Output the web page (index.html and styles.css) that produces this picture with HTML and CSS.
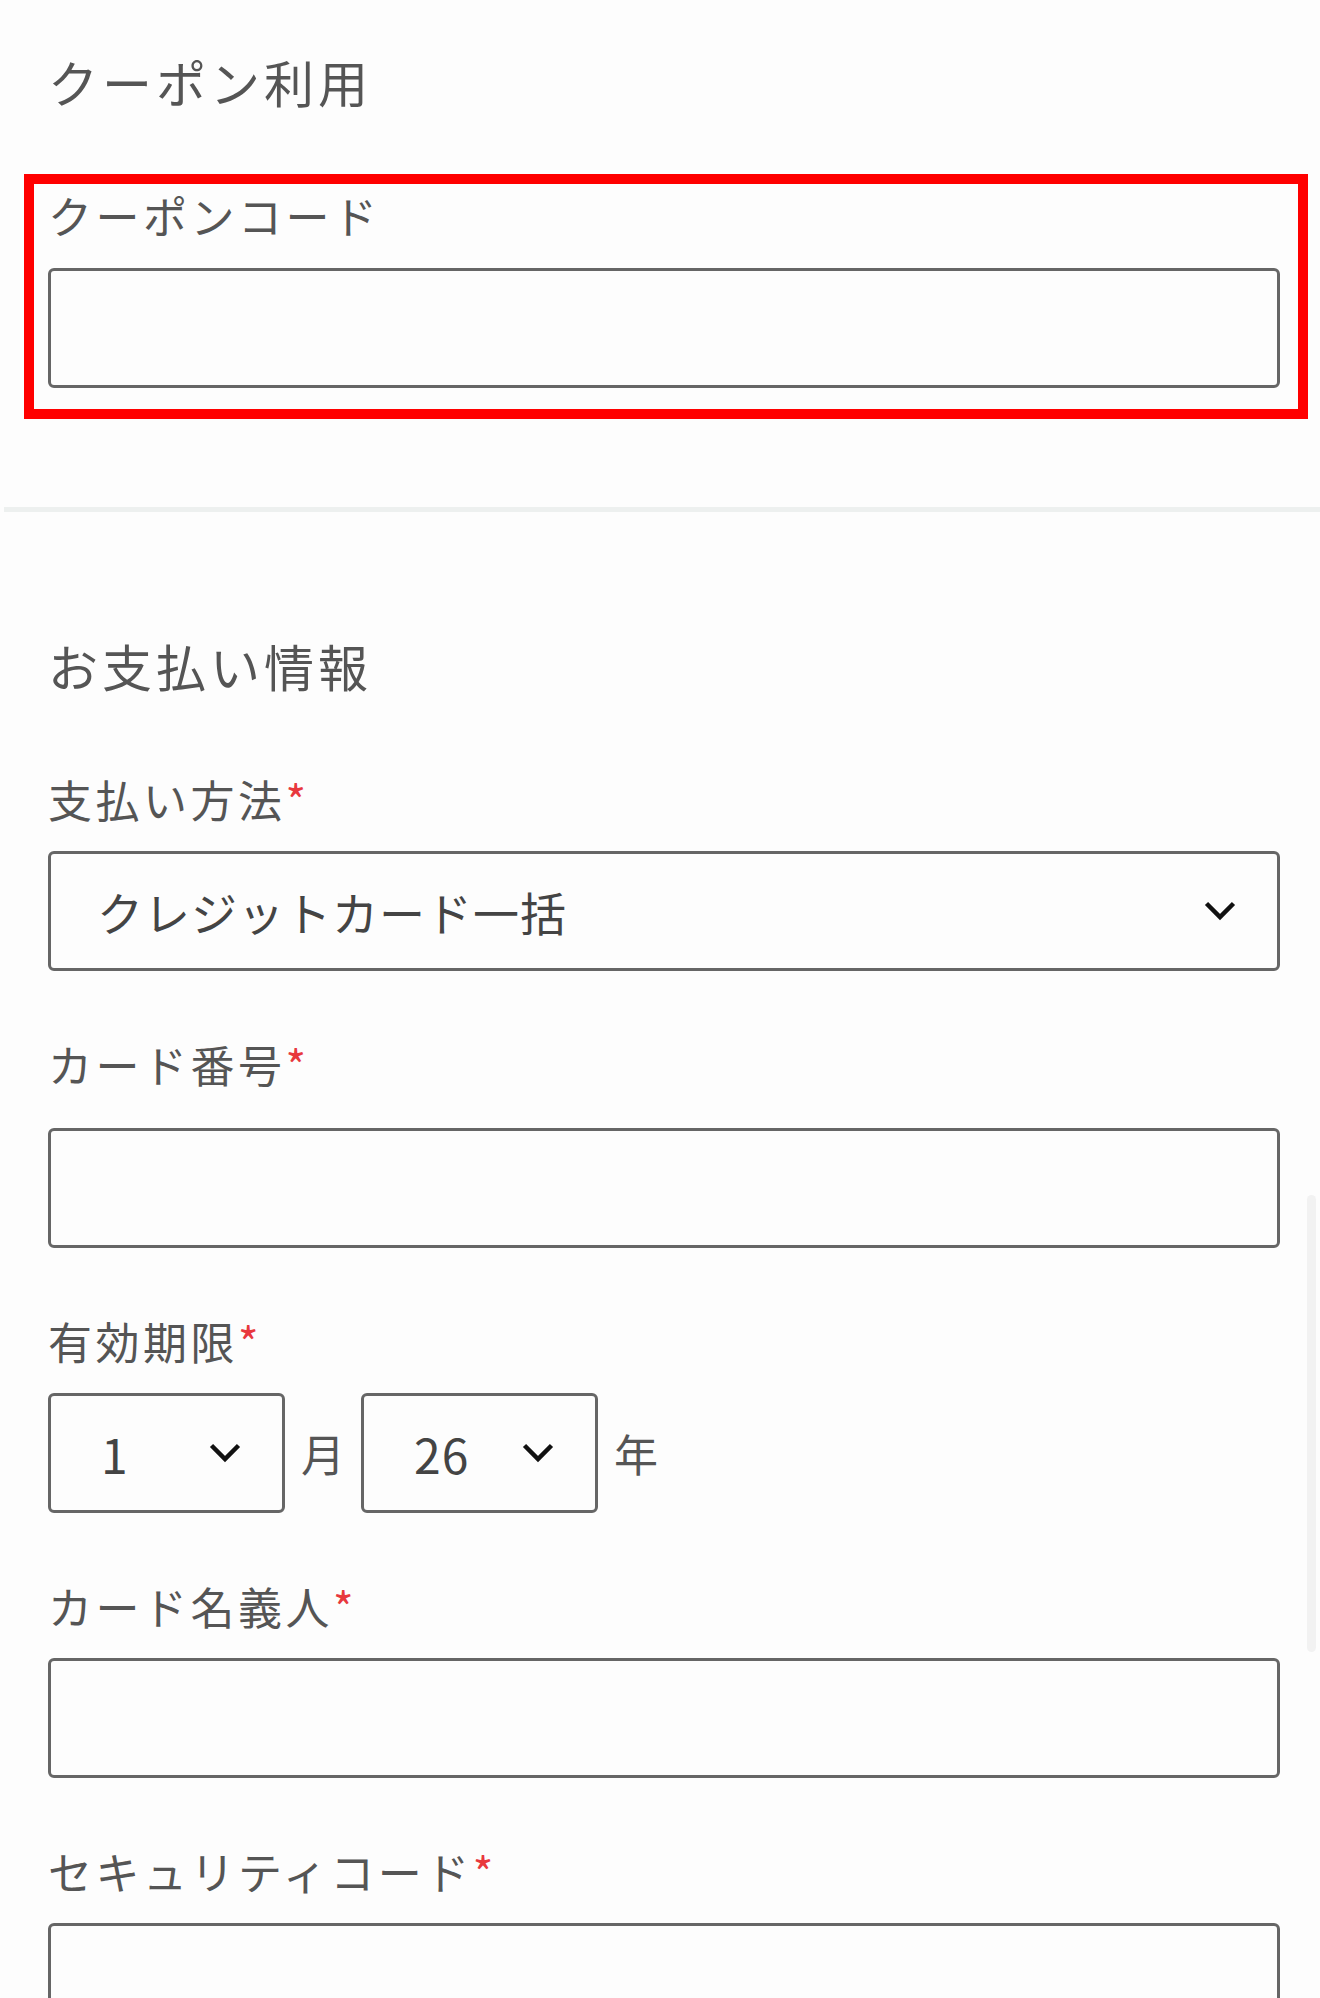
FILE: index.html
```html
<!DOCTYPE html>
<html lang="ja">
<head>
    <meta charset="UTF-8">
    <meta name="viewport" content="width=device-width, initial-scale=1.0">
    <title>お支払い</title>
    <link rel="stylesheet" href="styles.css">
</head>
<body>
    <section class="section coupon">
        <h2 class="section-title">クーポン利用</h2>
        <div class="highlight">
            <label class="field-label" for="couponCode">クーポンコード</label>
            <input class="text-input" type="text" id="couponCode">
        </div>
    </section>

    <hr class="divider">

    <section class="section payment">
        <h2 class="section-title">お支払い情報</h2>

        <div class="field">
            <label class="field-label">支払い方法<span class="required">*</span></label>
            <div class="select">
                <span class="select-value">クレジットカード一括</span>
                <svg class="chevron" viewBox="0 0 32 20"><polyline points="2.5,2.5 16,16 29.5,2.5"/></svg>
            </div>
        </div>

        <div class="field">
            <label class="field-label card-number" for="cardNumber">カード番号<span class="required">*</span></label>
            <input class="text-input" type="text" id="cardNumber">
        </div>

        <div class="field">
            <label class="field-label">有効期限<span class="required">*</span></label>
            <div class="expiry">
                <div class="select small">
                    <span class="select-value">1</span>
                    <svg class="chevron" viewBox="0 0 32 20"><polyline points="2.5,2.5 16,16 29.5,2.5"/></svg>
                </div>
                <span class="unit">月</span>
                <div class="select small">
                    <span class="select-value">26</span>
                    <svg class="chevron" viewBox="0 0 32 20"><polyline points="2.5,2.5 16,16 29.5,2.5"/></svg>
                </div>
                <span class="unit">年</span>
            </div>
        </div>

        <div class="field">
            <label class="field-label" for="cardName">カード名義人<span class="required">*</span></label>
            <input class="text-input" type="text" id="cardName">
        </div>

        <div class="field">
            <label class="field-label" for="securityCode">セキュリティコード<span class="required">*</span></label>
            <input class="text-input" type="text" id="securityCode">
        </div>
    </section>

    <div class="scroll-thumb"></div>
</body>
</html>
```

FILE: styles.css
```css
body {
    font-family: "Noto Sans CJK JP", "Noto Sans", sans-serif;
    margin: 0;
    padding: 0;
    background: #fdfdfd;
    color: #555;
    position: relative;
    overflow: hidden;
}
.section {
    padding: 0 40px 0 48px;
}
.coupon {
    padding-top: 51px;
}
.section-title {
    margin: 0;
    font-size: 50px;
    font-weight: normal;
    line-height: 60px;
    letter-spacing: 4px;
    color: #555;
}
.highlight {
    margin: 63px -28px 0 -24px;
    padding: 3px 18px 21px 14px;
    border: 10px solid #ff0000;
}
.field-label {
    display: block;
    font-size: 44px;
    line-height: 56px;
    letter-spacing: 3.5px;
    margin-bottom: 24px;
}
.highlight .field-label {
    margin-bottom: 25px;
}
.field-label.card-number {
    margin-bottom: 36px;
}
.required {
    color: #e8383d;
    letter-spacing: 0;
}
.text-input {
    display: block;
    box-sizing: border-box;
    width: 100%;
    height: 120px;
    margin: 0;
    padding: 0 48px;
    border: 3px solid #666;
    border-radius: 6px;
    background: transparent;
    font-family: inherit;
    font-size: 46px;
    color: #444;
    outline: none;
}
.divider {
    margin: 88px 0 0 4px;
    height: 5px;
    border: none;
    background: #edf0ef;
}
.payment .section-title {
    margin-top: 123px;
    margin-bottom: 76px;
}
.field {
    margin-top: 65px;
}
.select {
    box-sizing: border-box;
    display: flex;
    align-items: center;
    justify-content: space-between;
    height: 120px;
    padding: 0 41px 0 46px;
    border: 3px solid #666;
    border-radius: 6px;
    font-size: 46px;
    letter-spacing: 1px;
    color: #444;
}
.select.small {
    width: 237px;
    padding-left: 50px;
    font-size: 48px;
}
.chevron {
    width: 32px;
    height: 20px;
    fill: none;
    stroke: #111;
    stroke-width: 4.5;
}
.expiry {
    display: flex;
    align-items: center;
    gap: 16px;
}
.unit {
    font-size: 44px;
    color: #555;
}
.scroll-thumb {
    position: absolute;
    left: 1307px;
    top: 1195px;
    width: 9px;
    height: 457px;
    border-radius: 5px;
    background: #f2f2f2;
}
```
